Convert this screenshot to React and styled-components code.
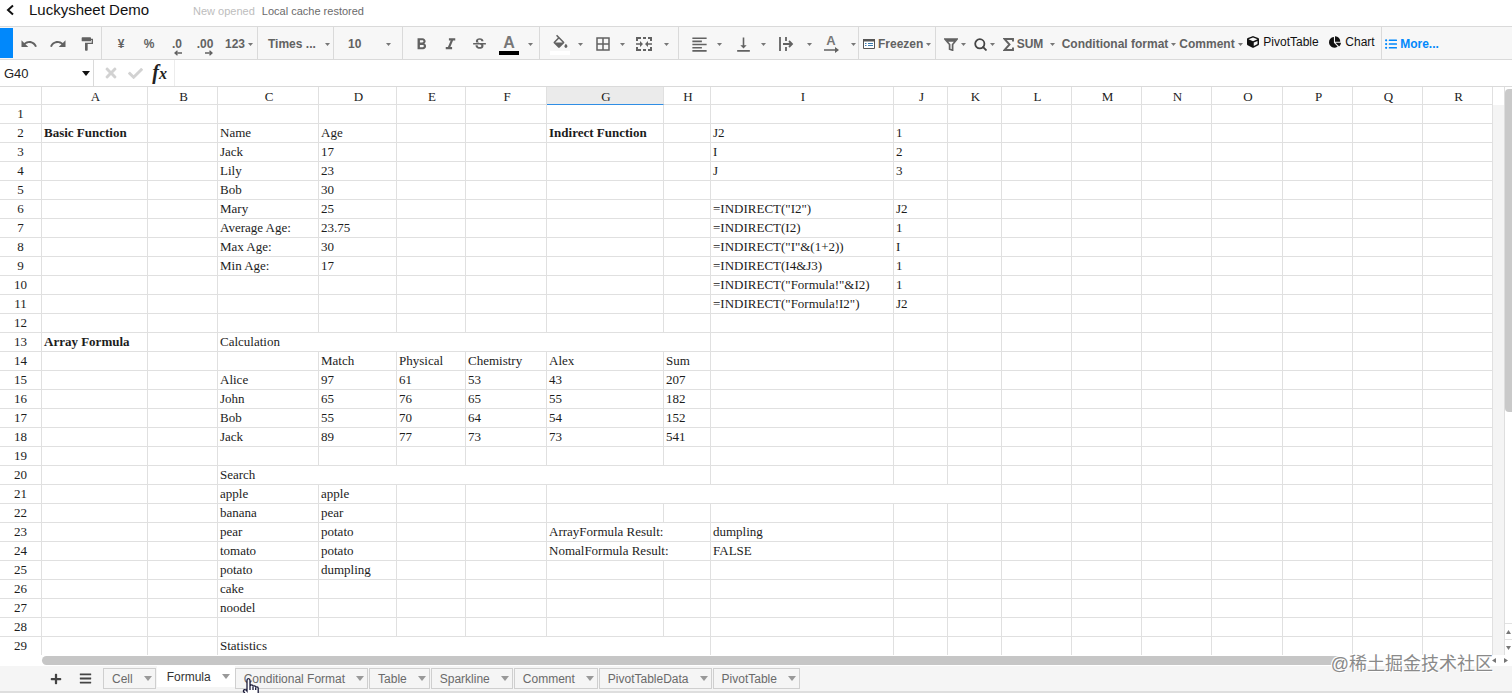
import React, { useState } from "react";
import styled, { createGlobalStyle, css } from "styled-components";
import {
  MdUndo,
  MdRedo,
  MdFormatPaint,
  MdFormatBold,
  MdFormatItalic,
  MdStrikethroughS,
  MdBorderAll,
  MdFormatAlignLeft,
  MdVerticalAlignBottom,
} from "react-icons/md";
import { FaCube, FaChartPie, FaListUl, FaTimes, FaCheck, FaPlus, FaBars } from "react-icons/fa";

const GlobalStyle = createGlobalStyle`
  * { box-sizing: border-box; }

  body {
    margin: 0;
    overflow: hidden;
    font-family: "Liberation Sans", Arial, sans-serif;
    background: #fff;
  }

  button {
    font: inherit;
    color: inherit;
    background: none;
    border: 0;
    margin: 0;
    padding: 0;
    cursor: pointer;
  }

  svg { flex: none; }
`;

const Page = styled.div`
  position: relative;
  display: flex;
  flex-direction: column;
  height: 100vh;
`;

/* ---------- title ---------- */

const TitleBar = styled.header`
  display: flex;
  align-items: center;
  flex: none;
  height: 26px;
  padding: 0 6px 6px;
`;

const BackLink = styled.a`
  display: flex;
  width: 23px;
  color: #111;
`;

const Title = styled.h1`
  margin: 0 44px 0 0;
  font-size: 15px;
  font-weight: 400;
  line-height: 20px;
  color: #111;
`;

const Status = styled.span`
  margin: 2px 7px 0 0;
  font-size: 11px;
  line-height: 16px;
  color: ${(p) => (p.$faded ? "#bdbdbd" : "#6b6b6b")};
`;

/* ---------- toolbar ---------- */

const Toolbar = styled.div`
  display: flex;
  flex: none;
  height: 34px;
  border-top: 1px solid #dadada;
  border-bottom: 1px solid #dadada;
  background: #f7f7f7;
  font-size: 12px;
  font-weight: 700;
  color: #626262;
`;

const MenuBlock = styled.button`
  width: 13px;
  margin: 1px 0;
  background: #0188fb;
`;

const Group = styled.div`
  display: flex;
  align-items: center;
  flex: none;
  width: ${(p) => (p.$width ? p.$width + "px" : "auto")};
  padding-left: ${(p) => p.$pad || 0}px;
  border-right: ${(p) => (p.$last ? "0" : "1px solid #dadada")};
`;

const Tool = styled.button`
  display: flex;
  align-items: center;
  justify-content: ${(p) => (p.$start ? "flex-start" : "center")};
  flex: none;
  width: ${(p) => p.$width || 28}px;
  height: 28px;
  padding-top: 2px;
  white-space: nowrap;
  gap: 3px;
`;

const CaretIcon = styled.svg`
  flex: none;
  width: ${(p) => p.$size || 5}px;
  height: ${(p) => (p.$size ? 5 : 3)}px;
  fill: ${(p) => p.$color || "#777"};
`;

const StackedTool = styled(Tool)`
  flex-direction: column;
  gap: 0;
`;

const Swatch = styled.span`
  width: 20px;
  height: 4px;
  background: ${(p) => p.$color};
`;

const Letter = styled.span`
  font-size: ${(p) => (p.$small ? 13 : 16)}px;
  line-height: ${(p) => (p.$small ? 12 : 17)}px;
  color: #777;
`;

const Decimal = styled.span`
  display: flex;
  flex-direction: column;
  align-items: flex-end;
  padding-top: 6px;
  line-height: 11px;
`;

const PlainTool = styled(Tool)`
  gap: 4px;
  padding-bottom: 4px;
  font-weight: 400;
  color: #111;
`;

const MoreTool = styled(Tool)`
  color: #0188fb;
`;

/* ---------- formula bar ---------- */

const FormulaBar = styled.div`
  display: flex;
  align-items: center;
  flex: none;
  height: 27px;
  border-bottom: 1px solid #dadada;
`;

const NameBox = styled.div`
  display: flex;
  align-items: center;
  width: 94px;
  height: 100%;
  padding: 0 3px 0 4px;
  border-right: 1px solid #dadada;
`;

const CellInput = styled.input`
  flex: 1;
  min-width: 0;
  height: 100%;
  padding: 0;
  border: 0;
  outline: 0;
  background: none;
  font: 13px "Liberation Sans", Arial, sans-serif;
  color: #222;
`;

const FormulaActions = styled.div`
  display: flex;
  align-items: center;
  justify-content: space-between;
  width: 81px;
  height: 100%;
  padding: 0 7px 0 9px;
  border-right: 1px solid #ececec;
  color: #d2d2d2;

  button {
    display: flex;
    align-items: baseline;
  }
`;

const Fx = styled.button`
  font: italic 700 20px/22px "Liberation Serif", "Times New Roman", serif;
  color: #222;

  small { font-size: 16px; }
`;

/* ---------- sheet ---------- */

const Main = styled.main`
  display: flex;
  flex: 1;
  min-height: 0;
`;

const GridArea = styled.div`
  flex: 1;
  min-width: 0;
  overflow: hidden;
  background: linear-gradient(#fff 18px, #f4f4f4 18px);
`;

const Sheet = styled.table`
  table-layout: fixed;
  width: 1493px;
  border-collapse: separate;
  border-spacing: 0;
  background: #fff;
  font: 13px/16px "Liberation Serif", "Times New Roman", serif;
  color: #1c1c1c;
`;

const line = css`
  border-right: 1px solid #e0e0e0;
  border-bottom: 1px solid #e0e0e0;
`;

const HeadCell = styled.th`
  ${line}
  height: 18px;
  padding: 1px 0 0 2px;
  font-weight: 400;
  line-height: 15px;
  background: ${(p) => (p.$active ? "#ebebeb" : "#fff")};
  border-bottom-color: ${(p) => (p.$active ? "#2f8de4" : "#e0e0e0")};
`;

const RowHead = styled.th`
  ${line}
  height: 19px;
  padding: 0;
  font-weight: 400;
`;

const Cell = styled.td`
  ${line}
  height: 19px;
  padding: 0 0 0 2px;
  overflow: hidden;
  white-space: nowrap;
  font-weight: ${(p) => (p.$bold ? 700 : 400)};
`;

const VScroll = styled.div`
  display: flex;
  flex-direction: column;
  flex: none;
  width: 8px;
  border-left: 1px solid #dedede;
  padding-top: 2px;
`;

const VThumb = styled.div`
  flex: 0 0 57%;
  margin-bottom: auto;
  border-radius: 4px 0 0 4px;
  background: #c9c9c9;
`;

const Arrow = styled.button`
  display: flex;
  align-items: center;
  justify-content: center;
  flex: none;
  width: ${(p) => (p.$side ? 12 : 7)}px;
  height: ${(p) => (p.$side ? 10 : 16)}px;
  border-top: ${(p) => (p.$side ? "0" : "1px solid #e2e2e2")};
`;

const HScroll = styled.div`
  display: flex;
  align-items: center;
  flex: none;
  height: 11px;
  padding-left: 42px;
  background: #fff;
`;

const HThumb = styled.div`
  flex: 0 1 1300px;
  height: 9px;
  margin-right: auto;
  border-radius: 5px;
  background: #c6c6c6;
`;

/* ---------- sheet tabs ---------- */

const TabBar = styled.footer`
  display: flex;
  align-items: flex-start;
  flex: none;
  height: 27px;
  padding: 2px 0 0 47px;
  border-bottom: 2px solid #dedede;
  background: #f5f5f5;
  font-size: 12px;
`;

const TabAction = styled.button`
  display: flex;
  align-items: center;
  justify-content: center;
  width: 17px;
  height: 21px;
  margin-right: 13px;
  color: #444;

  & + & { margin-right: 9px; }
`;

const Tab = styled.button`
  display: flex;
  align-items: center;
  gap: 11px;
  height: 21px;
  margin: ${(p) => (p.$active ? "-2px 0 0" : "0 1px 0 0")};
  padding: ${(p) => (p.$active ? "0 4px 0 9px" : "0 3px 0 8px")};
  border: 1px solid ${(p) => (p.$active ? "#fff" : "#cfcfcf")};
  background: ${(p) => (p.$active ? "#fff" : "#f5f5f5")};
  color: ${(p) => (p.$active ? "#333" : "#6a6a6a")};
`;

const Watermark = styled.div`
  position: absolute;
  right: 19px;
  bottom: 16px;
  font: 18px/26px "Liberation Sans", "Noto Sans CJK SC", sans-serif;
  color: #8a8a8a;
  text-shadow: 1px 1px 0 #fff, -1px -1px 0 #fff;
  pointer-events: none;
`;

const Pointer = styled.svg`
  position: absolute;
  left: 242px;
  bottom: -6px;
  pointer-events: none;
`;

function Caret({ size, color }) {
  return (
    <CaretIcon viewBox="0 0 10 6" preserveAspectRatio="none" $size={size} $color={color}>
      <path d="M0 0h10L5 6z" />
    </CaretIcon>
  );
}

function DropCaret({ width = 17 }) {
  return (
    <Tool $width={width} aria-label="More options">
      <Caret />
    </Tool>
  );
}

function BucketIcon() {
  return (
    <svg width="17" height="17" viewBox="1 -1 22 22" fill="currentColor">
      <path d="M16.560 8.940L7.620 0 6.210 1.410l2.380 2.380-5.150 5.150c-.59.59-.59 1.540 0 2.120l5.500 5.500c.29.29.68.44 1.060.44s.77-.15 1.060-.44l5.500-5.500c.59-.58.59-1.530 0-2.120zM5.210 10L10 5.210 14.790 10H5.210zM19 11.500s-2 2.170-2 3.500c0 1.100.9 2 2 2s2-.9 2-2c0-1.330-2-3.500-2-3.500z" />
    </svg>
  );
}

function MergeIcon() {
  return (
    <svg width="18" height="16" viewBox="0 0 18 16" fill="none" stroke="currentColor" strokeWidth="2">
      <path d="M2 5V2h4M8 2h3M13 2h3v3M2 11v3h4M8 14h3M13 14h3v-3" />
      <path d="M1 8h5M17 8h-5" strokeWidth="1.6" />
      <path d="M5 5l3 3-3 3zM13 5l-3 3 3 3z" fill="currentColor" stroke="none" />
    </svg>
  );
}

function WrapIcon() {
  return (
    <svg width="16" height="14" viewBox="0 0 16 14" fill="none" stroke="currentColor" strokeWidth="1.8">
      <path d="M2 0v14M8 0v4M8 10v4M5 7h9M11 4l3 3-3 3" />
    </svg>
  );
}

function RotationArrow() {
  return (
    <svg width="15" height="6" viewBox="0 0 15 6" fill="currentColor">
      <path d="M0 2.200h11V0l4 3-4 3V3.800H0z" />
    </svg>
  );
}

function FreezeIcon() {
  return (
    <svg width="12" height="10" viewBox="0 0 12 10">
      <path d="M.5.5h11v9H.5z" fill="#fff" stroke="#555" />
      <path d="M0 0h12v2.500H0z" fill="#555" />
      <path d="M2 4.500h1.500M2 6.500h1.500M5 4.500h5M5 6.500h5" stroke="#3a7bb0" />
    </svg>
  );
}

function FilterIcon() {
  return (
    <svg width="14" height="13" viewBox="0 0 14 13" fill="none" stroke="currentColor" strokeWidth="1.7">
      <path d="M1 1.200h12L8.600 6.500v5.700l-3-1V6.500zM3 2.800h8" />
    </svg>
  );
}

function SearchIcon() {
  return (
    <svg width="13" height="13" viewBox="0 0 13 13" fill="none" stroke="#444" strokeWidth="1.8">
      <circle cx="5.8" cy="5.8" r="4.6" />
      <path d="M8.500 8.500l4 4" />
    </svg>
  );
}

function SumIcon() {
  return (
    <svg width="11" height="13" viewBox="0 0 11 13" fill="none" stroke="currentColor" strokeWidth="1.9">
      <path d="M10 3.500V1H1.500L6.500 6.500 1.500 12H10V9.500" />
    </svg>
  );
}

function DecimalArrow({ right }) {
  return (
    <svg width="8" height="6" viewBox="0 0 8 6" fill="none" stroke="currentColor" strokeWidth="1.3">
      <path d={right ? "M0 3h7M4.500.7L7 3 4.500 5.300" : "M8 3H1M3.500.7L1 3l2.500 2.300"} />
    </svg>
  );
}

const columns = [
  ["A", 106], ["B", 70], ["C", 101], ["D", 78], ["E", 69], ["F", 81], ["G", 117], ["H", 47], ["I", 183],
  ["J", 54], ["K", 54], ["L", 70], ["M", 70], ["N", 70], ["O", 71], ["P", 70], ["Q", 70], ["R", 70],
];

const cells = {
  A2: "Basic Function", C2: "Name", D2: "Age", G2: "Indirect Function", I2: "J2", J2: "1",
  C3: "Jack", D3: "17", I3: "I", J3: "2",
  C4: "Lily", D4: "23", I4: "J", J4: "3",
  C5: "Bob", D5: "30",
  C6: "Mary", D6: "25", I6: '=INDIRECT("I2")', J6: "J2",
  C7: "Average Age:", D7: "23.75", I7: "=INDIRECT(I2)", J7: "1",
  C8: "Max Age:", D8: "30", I8: '=INDIRECT("I"&(1+2))', J8: "I",
  C9: "Min Age:", D9: "17", I9: "=INDIRECT(I4&J3)", J9: "1",
  I10: '=INDIRECT("Formula!"&I2)', J10: "1",
  I11: '=INDIRECT("Formula!I2")', J11: "J2",
  A13: "Array Formula", C13: "Calculation",
  D14: "Match", E14: "Physical", F14: "Chemistry", G14: "Alex", H14: "Sum",
  C15: "Alice", D15: "97", E15: "61", F15: "53", G15: "43", H15: "207",
  C16: "John", D16: "65", E16: "76", F16: "65", G16: "55", H16: "182",
  C17: "Bob", D17: "55", E17: "70", F17: "64", G17: "54", H17: "152",
  C18: "Jack", D18: "89", E18: "77", F18: "73", G18: "73", H18: "541",
  C20: "Search",
  C21: "apple", D21: "apple",
  C22: "banana", D22: "pear",
  C23: "pear", D23: "potato", G23: "ArrayFormula Result:", I23: "dumpling",
  C24: "tomato", D24: "potato", G24: "NomalFormula Result:", I24: "FALSE",
  C25: "potato", D25: "dumpling",
  C26: "cake",
  C27: "noodel",
  C29: "Statistics",
};

const boldCells = ["A2", "G2", "A13"];

// first cell of a merged range -> number of columns it covers
const merges = { C13: 6, C20: 6, G21: 5, G23: 2, G24: 2, C29: 6 };

const sheetTabs = [
  "Cell", "Formula", "Conditional Format", "Table", "Sparkline", "Comment", "PivotTableData", "PivotTable",
];

function renderRow(row) {
  const items = [];
  for (let i = 0; i < columns.length; i++) {
    const id = columns[i][0] + row;
    const span = merges[id] || 1;
    items.push(
      <Cell key={id} colSpan={span} $bold={boldCells.includes(id)}>
        {cells[id]}
      </Cell>
    );
    i += span - 1;
  }
  return (
    <tr key={row}>
      <RowHead scope="row">{row}</RowHead>
      {items}
    </tr>
  );
}

export default function App() {
  const [activeTab, setActiveTab] = useState("Formula");
  const [cellName, setCellName] = useState("G40");
  const [formula, setFormula] = useState("");

  return (
    <Page>
      <GlobalStyle />

      <TitleBar>
        <BackLink href="#" aria-label="Back">
          <svg width="8" height="12" viewBox="0 0 8 12" fill="none" stroke="currentColor" strokeWidth="2">
            <path d="M7 1.500L2 6l5 4.500" />
          </svg>
        </BackLink>
        <Title>Luckysheet Demo</Title>
        <Status $faded>New opened</Status>
        <Status>Local cache restored</Status>
      </TitleBar>

      <Toolbar>
        <MenuBlock aria-label="Menu" />
        <Group $width={89} $pad={1}>
          <Tool $width={29} aria-label="Undo"><MdUndo size={18} /></Tool>
          <Tool $width={29} aria-label="Redo"><MdRedo size={18} /></Tool>
          <Tool $width={29} aria-label="Paint format"><MdFormatPaint size={16} /></Tool>
        </Group>
        <Group $width={156} $pad={5}>
          <Tool>¥</Tool>
          <Tool>%</Tool>
          <Tool aria-label="Decrease decimals"><Decimal>.0<DecimalArrow /></Decimal></Tool>
          <Tool aria-label="Increase decimals"><Decimal>.00<DecimalArrow right /></Decimal></Tool>
          <Tool $width={40}>123<Caret /></Tool>
        </Group>
        <Group $width={76} $pad={10}>
          <Tool $start $width={53}>Times ...</Tool>
          <DropCaret width={12} />
        </Group>
        <Group $width={69} $pad={14}>
          <Tool $start $width={32}>10</Tool>
          <DropCaret />
        </Group>
        <Group $width={137} $pad={4}>
          <Tool aria-label="Bold"><MdFormatBold size={19} /></Tool>
          <Tool $width={30} aria-label="Italic"><MdFormatItalic size={19} /></Tool>
          <Tool aria-label="Strikethrough"><MdStrikethroughS size={17} /></Tool>
          <StackedTool $width={32} aria-label="Text color"><Letter>A</Letter><Swatch $color="#000" /></StackedTool>
          <DropCaret width={10} />
        </Group>
        <Group $width={139} $pad={6}>
          <StackedTool aria-label="Fill color"><BucketIcon /><Swatch $color="#fff" /></StackedTool>
          <DropCaret width={12} />
          <Tool $width={34} aria-label="Borders"><MdBorderAll size={18} /></Tool>
          <DropCaret width={4} />
          <Tool $width={40} aria-label="Merge cells"><MergeIcon /></Tool>
          <DropCaret width={4} />
        </Group>
        <Group $width={180} $pad={6}>
          <Tool aria-label="Horizontal align"><MdFormatAlignLeft size={19} /></Tool>
          <DropCaret width={12} />
          <Tool $width={36} aria-label="Vertical align"><MdVerticalAlignBottom size={19} /></Tool>
          <DropCaret width={4} />
          <Tool $width={42} aria-label="Text wrap"><WrapIcon /></Tool>
          <DropCaret width={4} />
          <StackedTool $width={40} aria-label="Text rotation"><Letter $small>A</Letter><RotationArrow /></StackedTool>
          <DropCaret width={4} />
        </Group>
        <Group $width={77} $pad={4}>
          <Tool $start $width={68}><FreezeIcon />Freezen<Caret /></Tool>
        </Group>
        <Group $width={446} $pad={6}>
          <Tool $width={25} aria-label="Filter"><FilterIcon /><Caret /></Tool>
          <Tool $width={34} aria-label="Find"><SearchIcon /><Caret /></Tool>
          <Tool $width={44}><SumIcon />SUM</Tool>
          <DropCaret width={14} />
          <Tool $width={120}>Conditional format<Caret /></Tool>
          <Tool $width={64}>Comment<Caret /></Tool>
          <PlainTool $width={80}><FaCube size={12} />PivotTable</PlainTool>
          <PlainTool $width={58}><FaChartPie size={12} />Chart</PlainTool>
        </Group>
        <Group $last $pad={3}>
          <MoreTool $width={54}><FaListUl size={12} />More...</MoreTool>
        </Group>
      </Toolbar>

      <FormulaBar>
        <NameBox>
          <CellInput aria-label="Cell name" value={cellName} onChange={(e) => setCellName(e.target.value)} />
          <Caret size={8} color="#111" />
        </NameBox>
        <FormulaActions>
          <button aria-label="Cancel"><FaTimes size={16} /></button>
          <button aria-label="Confirm"><FaCheck size={15} /></button>
          <Fx>f<small>x</small></Fx>
        </FormulaActions>
        <CellInput aria-label="Formula" value={formula} onChange={(e) => setFormula(e.target.value)} />
      </FormulaBar>

      <Main>
        <GridArea>
          <Sheet>
            <colgroup>
              <col width={42} />
              {columns.map(([name, width]) => <col key={name} width={width} />)}
            </colgroup>
            <thead>
              <tr>
                <HeadCell />
                {columns.map(([name]) => <HeadCell key={name} scope="col" $active={name === "G"}>{name}</HeadCell>)}
              </tr>
            </thead>
            <tbody>{Array.from({ length: 29 }, (_, i) => renderRow(i + 1))}</tbody>
          </Sheet>
        </GridArea>
        <VScroll>
          <VThumb />
          <Arrow aria-label="Scroll up">
            <svg width="5" height="4" viewBox="0 0 5 4"><path d="M0 4h5L2.500 0z" fill="#777" /></svg>
          </Arrow>
          <Arrow aria-label="Scroll down">
            <svg width="5" height="4" viewBox="0 0 5 4"><path d="M0 0h5L2.500 4z" fill="#777" /></svg>
          </Arrow>
        </VScroll>
      </Main>

      <HScroll>
        <HThumb />
        <Arrow $side aria-label="Scroll left">
          <svg width="4" height="5" viewBox="0 0 4 5"><path d="M4 0v5L0 2.500z" fill="#777" /></svg>
        </Arrow>
        <Arrow $side aria-label="Scroll right">
          <svg width="4" height="5" viewBox="0 0 4 5"><path d="M0 0v5l4-2.500z" fill="#777" /></svg>
        </Arrow>
      </HScroll>

      <TabBar>
        <TabAction aria-label="Add sheet"><FaPlus size={12} /></TabAction>
        <TabAction aria-label="All sheets"><FaBars size={13} /></TabAction>
        {sheetTabs.map((name) => (
          <Tab key={name} $active={name === activeTab} onClick={() => setActiveTab(name)}>
            {name}
            <Caret size={8} color="#999" />
          </Tab>
        ))}
      </TabBar>

      <Watermark>@稀土掘金技术社区</Watermark>
      <Pointer width="18" height="22" viewBox="0 0 18 22" fill="#fff" stroke="#1b1b3a" strokeWidth="1.3">
        <path d="M5 13V3.500C5 1 8 1 8 3.500V9c0-1.500 3-1.500 3 0v.8c0-1.400 2.700-1.300 2.700.2v.8c0-1.300 2.500-1.100 2.500.5V17c0 3-1.500 4.500-4.500 4.500H9C6 21.500 4 17.500 1.500 14.500 1 12.500 3.500 12 5 14z" />
        <path d="M8 9v4M11 10v3M13.700 11v2" fill="none" />
      </Pointer>
    </Page>
  );
}
